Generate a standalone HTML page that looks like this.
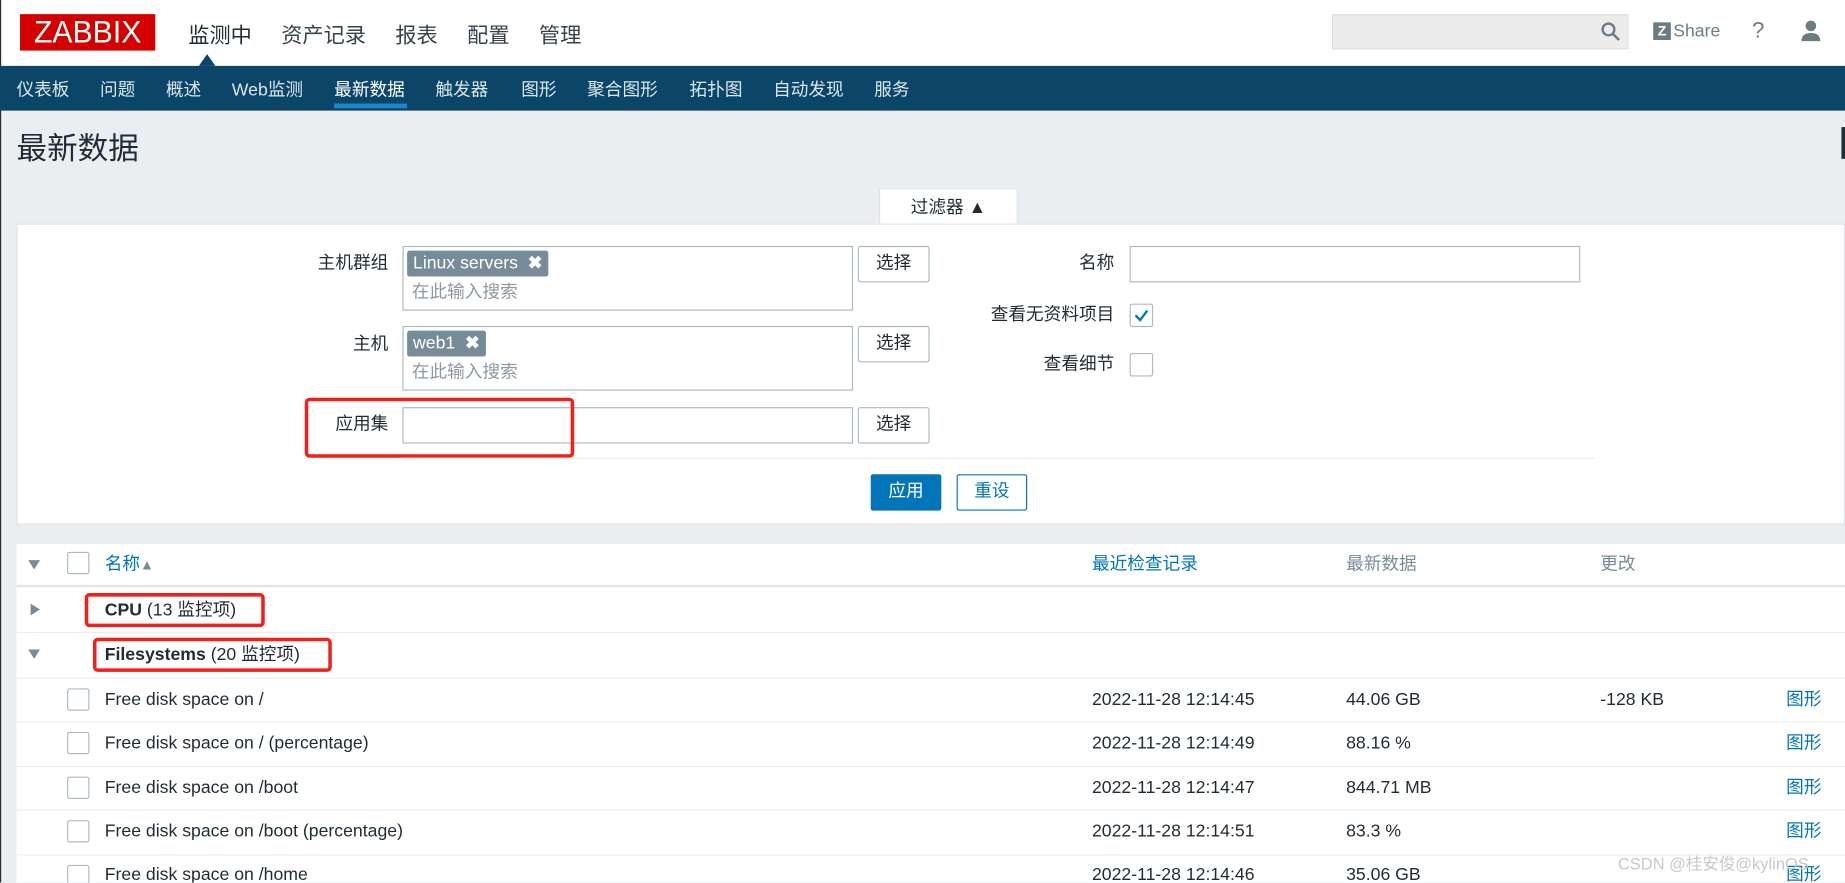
<!DOCTYPE html>
<html><head><meta charset="utf-8"><style>
html,body{margin:0;padding:0;width:1845px;height:882px;overflow:hidden;background:#ebeef0}
#w{position:absolute;left:0;top:0;width:1568px;height:750px;transform:scale(1.17666);transform-origin:0 0;background:#ebeef0;font-family:"Liberation Sans","Noto Sans CJK SC",sans-serif;color:#1f2c33;overflow:hidden}
.a{position:absolute;white-space:nowrap}
.t{font-size:15px;line-height:18px}
.box{position:absolute;border:1px solid #acbbc2;background:#fff;box-sizing:border-box}
.btn{position:absolute;border:1px solid #acbbc2;background:#fff;border-radius:2px;box-sizing:border-box;font-size:15px;text-align:center;line-height:28px;color:#1f2c33}
.tag{position:absolute;background:#768d99;color:#fff;border-radius:2px;font-size:15px;line-height:22px;padding:0 5px;height:22px}
.cb{position:absolute;width:18px;height:18px;border:1px solid #acbbc2;border-radius:2px;background:#fff;box-sizing:border-box}
.red{position:absolute;border:3px solid #f0201a;border-radius:4px;box-sizing:border-box}
.lnk{color:#0275b8}
</style></head><body><div id="w">
<div class="a" style="left:0;top:0;width:1568px;height:56px;background:#fff"></div>
<div class="a" style="left:0;top:0;width:1px;height:750px;background:#2a2f33"></div>
<div class="a" style="left:14px;top:12px;width:121px;height:31px;background:#d40000;color:#fff;font-size:27px;line-height:31px;text-align:center;letter-spacing:0px;transform:scaleX(0.95)">ZABBIX</div>
<div class="a" style="left:160px;top:16px;font-size:18px;color:#1f2c33">监测中</div>
<div class="a" style="left:239px;top:16px;font-size:18px;color:#35444c">资产记录</div>
<div class="a" style="left:336px;top:16px;font-size:18px;color:#35444c">报表</div>
<div class="a" style="left:397px;top:16px;font-size:18px;color:#35444c">配置</div>
<div class="a" style="left:458px;top:16px;font-size:18px;color:#35444c">管理</div>
<div class="a" style="left:169px;top:46px;width:0;height:0;border-left:7px solid transparent;border-right:7px solid transparent;border-bottom:10px solid #0b4669"></div>
<div class="a" style="left:1132px;top:12px;width:252px;height:30px;background:#ececec;border:1px solid #e0e0e0;box-sizing:border-box"></div>
<svg class="a" style="left:1360px;top:18px" width="18" height="18" viewBox="0 0 18 18"><circle cx="7" cy="7" r="5" fill="none" stroke="#6b7c85" stroke-width="2"/><line x1="11" y1="11" x2="16" y2="16" stroke="#6b7c85" stroke-width="2.2"/></svg>
<div class="a" style="left:1405px;top:19px;width:15px;height:15px;background:#6b7c85;color:#fff;font-size:12px;font-weight:bold;line-height:15px;text-align:center">Z</div>
<div class="a" style="left:1422px;top:18px;font-size:15px;color:#6b7c85">Share</div>
<div class="a" style="left:1489px;top:16px;font-size:19px;color:#6b7c85">?</div>
<svg class="a" style="left:1530px;top:16px" width="18" height="20" viewBox="0 0 18 20"><circle cx="9" cy="6" r="4.5" fill="#6b7c85"/><path d="M1 19 Q1 12 9 12 Q17 12 17 19Z" fill="#6b7c85"/></svg>
<div class="a" style="left:0;top:56px;width:1568px;height:38px;background:#0b4669"></div>
<div class="a" style="top:65px;left:0;font-size:15px;color:#dce6ec">
<span class="a" style="left:14px">仪表板</span><span class="a" style="left:85px">问题</span><span class="a" style="left:141px">概述</span><span class="a" style="left:197px">Web监测</span><span class="a" style="left:284px;color:#fff">最新数据</span><span class="a" style="left:370px">触发器</span><span class="a" style="left:443px">图形</span><span class="a" style="left:499px">聚合图形</span><span class="a" style="left:586px">拓扑图</span><span class="a" style="left:657px">自动发现</span><span class="a" style="left:743px">服务</span></div>
<div class="a" style="left:284px;top:88px;width:62px;height:4px;background:#1e87cd"></div>
<div class="a" style="left:14px;top:106px;font-size:26px;color:#1f2c33">最新数据</div>
<div class="a" style="left:1565px;top:108px;width:3px;height:27px;background:#1f2c33"></div>
<div class="a" style="left:747px;top:160px;width:118px;height:31px;background:#fff;border:1px solid #dfe4e7;border-bottom:none;box-sizing:border-box;font-size:15px;text-align:center;line-height:31px">过滤器 ▲</div>
<div class="a" style="left:14px;top:190px;width:1554px;height:256px;background:#fff;border:1px solid #dfe4e7;box-sizing:border-box"></div>
<div class="a t" style="left:250px;width:80px;text-align:right;top:215px">主机群组</div>
<div class="box" style="left:342px;top:209px;width:383px;height:55px"></div>
<div class="tag" style="left:346px;top:213px">Linux servers &nbsp;<b>✖</b></div>
<div class="a t" style="left:350px;top:240px;color:#8b9aa1">在此输入搜索</div>
<div class="btn" style="left:729px;top:209px;width:61px;height:31px">选择</div>
<div class="a t" style="left:250px;width:80px;text-align:right;top:284px">主机</div>
<div class="box" style="left:342px;top:277px;width:383px;height:55px"></div>
<div class="tag" style="left:346px;top:281px">web1 &nbsp;<b>✖</b></div>
<div class="a t" style="left:350px;top:308px;color:#8b9aa1">在此输入搜索</div>
<div class="btn" style="left:729px;top:277px;width:61px;height:31px">选择</div>
<div class="a t" style="left:250px;width:80px;text-align:right;top:352px">应用集</div>
<div class="box" style="left:342px;top:346px;width:383px;height:31px"></div>
<div class="btn" style="left:729px;top:346px;width:61px;height:31px">选择</div>
<div class="red" style="left:259px;top:338px;width:229px;height:51px"></div>
<div class="a t" style="left:800px;width:147px;text-align:right;top:215px">名称</div>
<div class="box" style="left:960px;top:209px;width:383px;height:31px"></div>
<div class="a t" style="left:800px;width:147px;text-align:right;top:259px">查看无资料项目</div>
<div class="cb" style="left:960px;top:258px;width:20px;height:20px"></div>
<svg class="a" style="left:962px;top:260px" width="16" height="16" viewBox="0 0 16 16"><path d="M3 8 L7 12 L13 4" fill="none" stroke="#0275b8" stroke-width="2"/></svg>
<div class="a t" style="left:800px;width:147px;text-align:right;top:301px">查看细节</div>
<div class="cb" style="left:960px;top:300px;width:20px;height:20px"></div>
<div class="a" style="left:342px;top:389px;width:1013px;height:1px;background:#ebeef0"></div>
<div class="btn" style="left:740px;top:403px;width:60px;height:31px;background:#0275b8;border-color:#0275b8;color:#fff">应用</div>
<div class="btn" style="left:813px;top:403px;width:60px;height:31px;border-color:#0275b8;color:#0275b8">重设</div>
<div class="a" style="left:14px;top:461px;width:1554px;height:289px;background:#fff;border-top:1px solid #dfe4e7"></div>
<div class="a" style="left:14px;top:497px;width:1554px;height:2px;background:#dfe4e7"></div>
<div class="a" style="left:24px;top:476px;border-left:5px solid transparent;border-right:5px solid transparent;border-top:8px solid #768d99"></div>
<div class="cb" style="left:57px;top:469px;width:19px;height:19px"></div>
<div class="a t lnk" style="left:89px;top:471px">名称<span style="color:#768d99;font-size:12px">▲</span></div>
<div class="a t lnk" style="left:928px;top:471px">最近检查记录</div>
<div class="a t" style="left:1144px;top:471px;color:#768d99">最新数据</div>
<div class="a t" style="left:1360px;top:471px;color:#768d99">更改</div>
<div class="a" style="left:14px;top:537px;width:1554px;height:1px;background:#ebeef0"></div>
<div class="a" style="left:26px;top:513px;border-top:5px solid transparent;border-bottom:5px solid transparent;border-left:8px solid #768d99"></div>
<div class="a t" style="left:89px;top:510px"><b>CPU</b> (13 监控项)</div>
<div class="red" style="left:72px;top:504px;width:153px;height:29px"></div>
<div class="a" style="left:14px;top:576px;width:1554px;height:1px;background:#ebeef0"></div>
<div class="a" style="left:24px;top:552px;border-left:5px solid transparent;border-right:5px solid transparent;border-top:8px solid #768d99"></div>
<div class="a t" style="left:89px;top:548px"><b>Filesystems</b> (20 监控项)</div>
<div class="red" style="left:79px;top:542px;width:203px;height:29px"></div>
<div class="a" style="left:14px;top:613px;width:1554px;height:1px;background:#ebeef0"></div>
<div class="a" style="left:14px;top:651px;width:1554px;height:1px;background:#ebeef0"></div>
<div class="a" style="left:14px;top:688px;width:1554px;height:1px;background:#ebeef0"></div>
<div class="a" style="left:14px;top:726px;width:1554px;height:1px;background:#ebeef0"></div>
<div class="cb" style="left:57px;top:585px;width:19px;height:19px"></div>
<div class="a t" style="left:89px;top:586px">Free disk space on /</div>
<div class="a t" style="left:928px;top:586px">2022-11-28 12:14:45</div>
<div class="a t" style="left:1144px;top:586px">44.06 GB</div>
<div class="a t" style="left:1360px;top:586px">-128 KB</div>
<div class="a t lnk" style="left:1518px;top:586px">图形</div>
<div class="cb" style="left:57px;top:622px;width:19px;height:19px"></div>
<div class="a t" style="left:89px;top:623px">Free disk space on / (percentage)</div>
<div class="a t" style="left:928px;top:623px">2022-11-28 12:14:49</div>
<div class="a t" style="left:1144px;top:623px">88.16 %</div>
<div class="a t lnk" style="left:1518px;top:623px">图形</div>
<div class="cb" style="left:57px;top:660px;width:19px;height:19px"></div>
<div class="a t" style="left:89px;top:661px">Free disk space on /boot</div>
<div class="a t" style="left:928px;top:661px">2022-11-28 12:14:47</div>
<div class="a t" style="left:1144px;top:661px">844.71 MB</div>
<div class="a t lnk" style="left:1518px;top:661px">图形</div>
<div class="cb" style="left:57px;top:697px;width:19px;height:19px"></div>
<div class="a t" style="left:89px;top:698px">Free disk space on /boot (percentage)</div>
<div class="a t" style="left:928px;top:698px">2022-11-28 12:14:51</div>
<div class="a t" style="left:1144px;top:698px">83.3 %</div>
<div class="a t lnk" style="left:1518px;top:698px">图形</div>
<div class="cb" style="left:57px;top:735px;width:19px;height:19px"></div>
<div class="a t" style="left:89px;top:735px">Free disk space on /home</div>
<div class="a t" style="left:928px;top:735px">2022-11-28 12:14:46</div>
<div class="a t" style="left:1144px;top:735px">35.06 GB</div>
<div class="a t lnk" style="left:1518px;top:735px">图形</div>
<div class="a" style="left:1375px;top:724px;font-size:14px;color:#c4cacd">CSDN @桂安俊@kylinOS</div>
</div></body></html>
